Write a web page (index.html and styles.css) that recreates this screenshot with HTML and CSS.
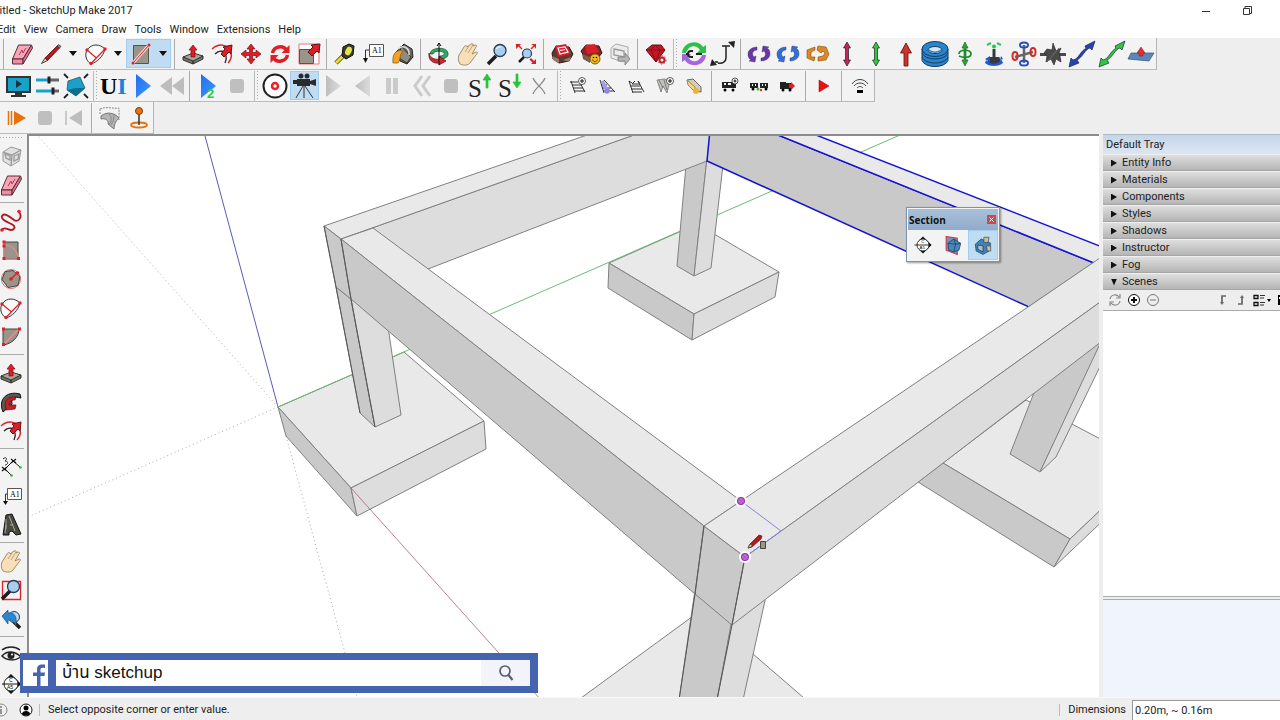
FILE: index.html
```html
<!DOCTYPE html>
<html lang="en">
<head>
<meta charset="utf-8">
<title>SketchUp Make 2017</title>
<link rel="stylesheet" href="styles.css">
</head>
<body>
<svg class="sprite" aria-hidden="true">
  <defs>
    <linearGradient id="gBlue" x1="0" x2="1" y1="0" y2="1"><stop offset="0" stop-color="#1f6df2"/><stop offset="1" stop-color="#3f9cff"/></linearGradient>
    <linearGradient id="gGrey" x1="0" x2="1"><stop offset="0" stop-color="#bdbdbd"/><stop offset="1" stop-color="#dcdcdc"/></linearGradient>
  </defs>
  <symbol id="eraser" viewBox="0 0 28 28"><path d="M10.500 5h13L15 19H4.500z" fill="#f8a5b8" stroke="#5a2d38"/><path d="M4.500 19H15v5H4.500z" fill="#ee8fa6" stroke="#5a2d38"/><path d="M23.500 5l1 3L15 24v-5z" fill="#e0708c" stroke="#5a2d38"/><path d="M11 15l3-5 1 3 3-5" fill="none" stroke="#b23b5c"/></symbol>
  <symbol id="pencil" viewBox="0 0 28 28"><path d="M8 18L20 6l2.500 2L10.500 20.500z" fill="#c3131b" stroke="#4b0d10" stroke-width=".8"/><path d="M8 18l2.500 2.500-6 3z" fill="#e8cda0" stroke="#222" stroke-width=".8"/><path d="M20 6l1.500-1.500 2.500 2L22.500 8z" fill="#888" stroke="#333" stroke-width=".8"/></symbol>
  <symbol id="arc" viewBox="0 0 28 28"><path d="M5 10C10 3 18 4 23 9C21 17 15 22 9 24C3 20 3 14 5 10z" fill="#fafafa" stroke="#333"/><path d="M9 23.500L23 9M5 10l9.500 8" stroke="#e0202a" stroke-width="1.200" fill="none"/><g fill="#e0202a"><circle cx="9" cy="23.500" r="1.700"/><circle cx="23" cy="9" r="1.700"/><circle cx="5" cy="10" r="1.700"/></g></symbol>
  <symbol id="rect" viewBox="0 0 28 28"><path d="M6.500 5.500h15v18h-15z" fill="#99958a" stroke="#56544d"/><path d="M6 23L22 5" stroke="#f6d4d4" stroke-width="3"/><path d="M6 23L22 5" stroke="#e0202a"/><circle cx="6" cy="23" r="1.500" fill="#e0202a"/><circle cx="22" cy="5" r="1.500" fill="#e0202a"/></symbol>
  <symbol id="push" viewBox="0 0 28 28"><path d="M4 17l10-4 10 3-10 6z" fill="#a8a698" stroke="#333"/><path d="M4 17v3l10 4v-3zM24 16v3l-10 5v-3z" fill="#77756a" stroke="#333"/><path d="M14 5l4 5h-2v7h-4v-7h-2z" fill="#df1d26" stroke="#7c0e13" stroke-width=".7"/></symbol>
  <symbol id="offset" viewBox="0 0 28 28"><path d="M4 9C12 2 21 5 23 13c1 4 0 7-3 10" fill="none" stroke="#e0202a" stroke-width="1.500"/><path d="M7 14c5-5 10-3 11 2 1 3 0 5-1 7" fill="none" stroke="#222" stroke-width="1.300"/><path d="M13 14l4-5-2-2 9-2-1 9-2-2-5 5z" fill="#df1d26" stroke="#681014"/></symbol>
  <symbol id="move" viewBox="0 0 28 28"><path d="M14 4l4 5h-2.500v3.500H19V10l5 4-5 4v-2.500h-3.500V19H18l-4 5-4-5h2.500v-3.500H9V18l-5-4 5-4v2.500h3.500V9H10z" fill="#df1d26" stroke="#7c0e13" stroke-width=".7"/></symbol>
  <symbol id="rotate" viewBox="0 0 28 28"><path d="M6.500 13C8 6 17 5 20 9.500M21.500 15C20 22 11 23 8 18.500" fill="none" stroke="#df1d26" stroke-width="3.500"/><path d="M23.500 5v8h-8zM4.500 23v-8h8z" fill="#df1d26"/></symbol>
  <symbol id="scale" viewBox="0 0 28 28"><path d="M4 4h20v20H4z" fill="#fff" stroke="#e57a7f"/><path d="M4.500 9.500h14v14h-14z" fill="#99958a" stroke="#56544d"/><path d="M13 12l5-5-2-2 9-1-1 9-2-2-5 5z" fill="#df1d26" stroke="#681014"/></symbol>
  <symbol id="tape" viewBox="0 0 28 28"><path d="M13 15l-8 8" stroke="#333" stroke-width="4.500"/><path d="M13 15l-8 8" stroke="#f0dd27" stroke-width="3"/><path d="M12 7l6-3 5 2-1 9-7 4-4-3z" fill="#3a3a26" stroke="#111"/><ellipse cx="17.500" cy="11" rx="3" ry="4.500" fill="#e6e14f" transform="rotate(25 17.500 11)"/></symbol>
  <symbol id="paint" viewBox="0 0 28 28"><path d="M7 12l8-8 8 5 1 8-6 7-7-3z" fill="#6c695f" stroke="#222"/><path d="M12 6l10 11-4 6-8-5z" fill="#8f8b7d" stroke="#222" stroke-width=".8"/><path d="M9 9c5-5 12-1 11 6" fill="none" stroke="#ddd" stroke-width="1.500"/><path d="M4 23c-1-9 3-14 10-12-4 4-2 9-5 12z" fill="#f2a323" stroke="#7d5514" stroke-width=".7"/></symbol>
  <symbol id="orbit" viewBox="0 0 28 28"><path d="M5 14c0-7 17-8 18-1 1 5-5 6-8 6v-3c3 0 5-2 4-3-3-3-10-2-11 1z" fill="#34a765" stroke="#1e4d31" stroke-width=".7"/><path d="M4 13c1 5 6 7 10 6v-3l7 5-7 4v-2C8 24 3 20 4 13z" fill="#cf2630" stroke="#5b1115" stroke-width=".7"/><path d="M14 3v22M12 6l2-3 2 3" stroke="#111" fill="none"/></symbol>
  <symbol id="hand" viewBox="0 0 28 28"><path d="M6 24c-2-3-2-6-1-9l5-8c1-2 3-2 3 0l4-3c2-1 3 1 2 2l2-1c2 0 2 1 1 2l-4 7 4-2c2 0 2 1 0 3l-6 8c-2 2-5 3-10 1z" fill="#f8dfb7" stroke="#8b7755" stroke-width=".8"/><path d="M11 12l4-6M14 13l5-8" stroke="#a88b61" stroke-width=".7"/></symbol>
  <symbol id="lens" viewBox="0 0 28 28"><path d="M5 24l8-8" stroke="#1d1d1d" stroke-width="3.500"/><circle cx="17" cy="10.500" r="6" fill="#a9cdee" stroke="#253c55" stroke-width="1.300"/><path d="M13.500 9c1-2 3-3 5-2" stroke="#e8f5ff" stroke-width="1.300" fill="none"/></symbol>
  <symbol id="extents" viewBox="0 0 28 28"><path d="M7 22l5-5" stroke="#1d1d1d" stroke-width="2.500"/><circle cx="15" cy="13.500" r="4.500" fill="#a9cdee" stroke="#253c55" stroke-width="1.200"/><g fill="#d71f29"><path d="M4 4h5L7.500 5.500l3 3-1 1-3-3L4 9zM24 4v5l-1.500-2.500-3 3-1-1 3-3L19 4zM24 24h-5l1.500-1.500-3-3 1.500-1.500 3 3L24 19z"/></g></symbol>
  <symbol id="wh" viewBox="0 0 28 28"><path d="M4 13l4-7 13 1 4 7-4 7-10 2-6-4z" fill="#5b3a30" stroke="#2b1a17"/><path d="M7 6l11-2 5 10-13 3z" fill="#d81f2c"/><path d="M10 8l7-1 3 5-8 2zM12 10.500l5-1" fill="none" stroke="#fff" stroke-width="1.200"/><path d="M4 16l7 3v4l-6-3zM15 20l8-3-2 5z" fill="#9a7a69"/></symbol>
  <symbol id="wh2" viewBox="0 0 28 28"><path d="M4 11l5-6 13 1 3 7-5 6-11 1z" fill="#8c2229" stroke="#2b1a17"/><path d="M8 5l10-1 4 8-12 2z" fill="#d81f2c"/><path d="M5 14l8 3v6l-7-4z" fill="#7b5a4e"/><circle cx="18" cy="19" r="5" fill="#f5be28" stroke="#7b5b10"/><path d="M15.500 19.500c1 3 4 3 5 0" fill="none" stroke="#553c00"/><circle cx="16.500" cy="17.500" r=".8"/><circle cx="19.500" cy="17.500" r=".8"/></symbol>
  <symbol id="share" viewBox="0 0 28 28"><path d="M5 8l5-4 12 3v12l-5 3-12-4z" fill="#ececec" stroke="#aaa"/><path d="M8 9l10 2v6L8 15z" fill="none" stroke="#9a9a9a" stroke-width="1.300"/><path d="M12 17h7v-4l5 6-5 6v-4h-7z" fill="#b5b5b5" stroke="#888"/></symbol>
  <symbol id="ruby" viewBox="0 0 28 28"><path d="M4 10l6-5h9l4 5-9 12z" fill="#c51622" stroke="#601016"/><path d="M4 10h19M9 10l4-5 5 5M9 10l5 12 4-12" fill="none" stroke="#8a0e17"/><circle cx="20" cy="20" r="2.500" fill="#f2f2f2" stroke="#b92430" stroke-width="2"/><circle cx="20" cy="20" r="4" fill="none" stroke="#b92430" stroke-dasharray="1.500 1.500"/></symbol>
  <symbol id="cyc" viewBox="0 0 28 28"><path d="M2 13C3 1 19-1 23 7l3-2v8h-9l3-3C17 5 9 4 6 13z" fill="#2fc04b"/><path d="M26 15c-1 12-17 13-21 5l-3 2v-8h9l-3 3c3 6 11 6 14-2z" fill="#a765dc"/><path d="M13 11h-2a3 3 0 0 0 0 6h2M16 14h6M6 14h3" stroke="#222" stroke-width="2" fill="none"/></symbol>
  <symbol id="jcurve" viewBox="0 0 28 28"><path d="M17 6v12c0 4-4 6-8 5M13 6h8M6 22h3" fill="none" stroke="#222" stroke-width="1.500"/><path d="M19 2l7-1-1 7zM1 26l2-7 5 6z" fill="#222"/></symbol>
  <symbol id="pair" viewBox="0 0 28 28"><path d="M3 14c0-4 4-7 9-7v3c-4 0-6 4-3 7l2-1-1 6-6-1 2-1c-2-1-3-3-3-6zM25 14c0 4-4 7-9 7v-3c4 0 6-4 3-7l-2 1 1-6 6 1-2 1c2 1 3 3 3 6z" fill="currentColor" stroke="#2b2b55" stroke-width=".4"/></symbol>
  <symbol id="pair2" viewBox="0 0 28 28"><path d="M3 10l8-3v3l-4 2v5h4l-1 4-7-3zM14 6l8 1 3 7-3 6-8 1v-4l5-1 2-3-2-2-2 2-4-3z" fill="#e08722" stroke="#7d4b10" stroke-width=".6"/></symbol>
  <symbol id="vert" viewBox="0 0 28 28"><path d="M14 2l3.500 6h-2v12h2L14 26l-3.500-6h2V8h-2z" fill="currentColor" stroke="#222" stroke-width=".7"/></symbol>
  <symbol id="up" viewBox="0 0 28 28"><path d="M14 3l5.500 10H16v13h-4V13H8.500z" fill="#d03428" stroke="#511" stroke-width=".8"/></symbol>
  <symbol id="spring" viewBox="0 0 28 28"><path d="M1 9c0 0 0 9 0 11 3 9 23 9 26 0V9z" fill="#2b84c9"/><ellipse cx="14" cy="9" rx="13" ry="7.500" fill="#2b84c9" stroke="#123e69"/><ellipse cx="14" cy="10" rx="7" ry="3.500" fill="#d6e6f2" stroke="#123e69"/><path d="M8 10c3 3 9 3 12 0" fill="none" stroke="#2b84c9" stroke-width="1.500"/><path d="M1 13c3 8 23 8 26 0M1 17c3 8 23 8 26 0M1 20.500c3 8 23 8 26 0M1 9v11.500M27 9v11.500" fill="none" stroke="#123e69"/></symbol>
  <symbol id="spin" viewBox="0 0 28 28"><path d="M14 2l3 6h-2v12h2l-3 6-3-6h2V8h-2z" fill="#2aa634" stroke="#164f1b" stroke-width=".6"/><path d="M8 14c0-5 12-5 12 0 0 4-8 4-12 2" fill="none" stroke="#1c8a26" stroke-width="1.700"/></symbol>
  <symbol id="joy" viewBox="0 0 28 28"><path d="M12.500 9h3v8h4l1 5c-4 4-9 4-13 0l1-5h4z" fill="#333a42"/><path d="M6 20c4 5 13 5 15-1l2 4c-4 4-14 4-18 0z" fill="#2657cd"/><path d="M5 19l5-3v6zM21 16l2 3-3 1z" fill="#2657cd"/><circle cx="14" cy="6.500" r="2" fill="#18cc45"/><path d="M7 5l4-2M17 3l4 2" stroke="#34c758" stroke-width="2"/></symbol>
  <symbol id="multi" viewBox="0 0 28 28"><path d="M5 17l18-5M14 5v18" stroke="#666" stroke-width="2.500"/><g fill="none" stroke-width="2"><ellipse cx="14" cy="5" rx="4" ry="2.500" stroke="#274fc0"/><ellipse cx="14" cy="23" rx="4" ry="2.500" stroke="#274fc0"/><ellipse cx="23" cy="12" rx="2.500" ry="4" stroke="#d52929"/><ellipse cx="5" cy="16" rx="2.500" ry="4" stroke="#d52929"/></g></symbol>
  <symbol id="jack" viewBox="0 0 28 28"><path d="M1 13h26v3H1z" fill="#4a4a4a"/><path d="M14 3l3 8 5-3-2 5 1 3 1 6-5-3-2 6-3-6-5 3 1-6-3-3 3-4 5 1z" fill="#4a4a4a" stroke="#2c2c2c" stroke-width=".7"/><path d="M8 22L20 8" stroke="#6d6d6d"/></symbol>
  <symbol id="diag" viewBox="0 0 28 28"><path d="M1 27l2-9 2 2c6-1 7-9 13-11.500L17 6l10-5-3 9-2-2c-5 1-7 9-13 12l2 3z" fill="currentColor" stroke="#1a2a45" stroke-width=".7"/></symbol>
  <symbol id="plane" viewBox="0 0 28 28"><path d="M4 13l23 0-5 8-21-2z" fill="#5d86b8" stroke="#3a5375" stroke-width=".7"/><path d="M14 7l4 6h-2v3h-4v-3h-2z" fill="#dd3038" stroke="#8c1b20" stroke-width=".5"/></symbol>

  <symbol id="monitor" viewBox="0 0 28 28"><path d="M3 5h23v15H3z" fill="#18a2ca" stroke="#333" stroke-width="2"/><path d="M12 8l6 4-6 4z" fill="#15323d"/><path d="M7 24h15M11 22h7" stroke="#333" stroke-width="2"/></symbol>
  <symbol id="sliders" viewBox="0 0 28 28"><path d="M3 8h12M3 19h16" stroke="#18a2ca" stroke-width="3"/><path d="M15 8h11M20 19h6" stroke="#666" stroke-width="3"/><path d="M16 4.500v7M20 15.500v7" stroke="#222" stroke-width="3"/></symbol>
  <symbol id="cube" viewBox="0 0 28 28"><path d="M6 9l12-4 5 11-9 8-9-6z" fill="#18a2ca" stroke="#28454f" stroke-width=".7"/><path d="M23 16l-9 8-9-6 9-2z" fill="#0c6d8f"/><path d="M2 2l4 4M26 2l-4 4M2 26l4-4M26 26l-4-4" stroke="#222" stroke-width="1.800"/></symbol>
  <symbol id="play" viewBox="0 0 28 28"><path d="M7 2l15 12L7 26z" fill="url(#gBlue)"/></symbol>
  <symbol id="rew" viewBox="0 0 28 28"><path d="M14 5v18L2 14zM26 5v18l-12-9z" fill="#bdbdbd"/></symbol>
  <symbol id="stop" viewBox="0 0 28 28"><rect x="7" y="7" width="14" height="14" rx="3" fill="#bfbfbf"/></symbol>
  <symbol id="rec" viewBox="0 0 28 28"><circle cx="14" cy="14" r="11.500" fill="#fff" stroke="#222" stroke-width="2"/><circle cx="14" cy="14" r="3" fill="none" stroke="#ef2028" stroke-width="2.500"/></symbol>
  <symbol id="movie" viewBox="0 0 28 28"><g fill="#2a2a2a"><circle cx="11" cy="4" r="2.500"/><circle cx="17" cy="4" r="2.500"/><path d="M7 7h13v7H7zM20 9l6-2v7l-6-2zM3 8h4v4H3z"/></g><path d="M13 14L6 26M14 14v12M15 14l8 12" stroke="#333" fill="none"/></symbol>
  <symbol id="gplay" viewBox="0 0 28 28"><path d="M7 3l15 11L7 25z" fill="url(#gGrey)"/></symbol>
  <symbol id="gback" viewBox="0 0 28 28"><path d="M21 3v22L6 14z" fill="url(#gGrey)"/></symbol>
  <symbol id="pause" viewBox="0 0 28 28"><path d="M8 6h5v16H8zM15 6h5v16h-5z" fill="#cacaca"/></symbol>
  <symbol id="dback" viewBox="0 0 28 28"><path d="M14 4L7 14l7 10M22 4l-7 10 7 10" fill="none" stroke="#cbcbcb" stroke-width="3"/></symbol>
  <symbol id="ex" viewBox="0 0 28 28"><path d="M8 6c3 7 10 10 12 16M20 6C17 13 10 16 8 22" fill="none" stroke="#888" stroke-width="1.300"/></symbol>
  <symbol id="track" viewBox="0 0 28 28"><path d="M7 9l4 12M16 9l6 11M7 9l3 2M13 9l-3 3h8l-2-3M8 14h10M9 17h11M11 20h9" stroke="#333" fill="none"/></symbol>
  <symbol id="trackadd" viewBox="0 0 28 28"><path d="M7 9l4 12M15 9l6 11M6 10h8M8 13h10M9 16h10M10 19h11" stroke="#333" fill="none"/><circle cx="18" cy="9" r="3.500" fill="#fff" stroke="#333" stroke-width=".8"/><path d="M16 9h4M18 7v4" stroke="#111"/></symbol>
  <symbol id="trackblue" viewBox="0 0 28 28"><path d="M7 8l4 13M11 8l11 12M8 13h6M9 16h9M10 19h11" stroke="#333" fill="none"/><path d="M9 9l5 9" stroke="#a29df0" stroke-width="3.500"/><circle cx="14" cy="19" r="2.800" fill="#8c87e8"/></symbol>
  <symbol id="wall" viewBox="0 0 28 28"><path d="M6 8l4 12 2-6 4 7 3-13-6-1z" fill="#c2c2be" stroke="#666" stroke-width=".7"/><path d="M8 8l4 8M13 8l3 10" stroke="#777"/><circle cx="19" cy="9" r="3.500" fill="#fff" stroke="#333" stroke-width=".8"/><path d="M17 9h4M19 7v4" stroke="#111"/></symbol>
  <symbol id="wedge" viewBox="0 0 28 28"><path d="M7 8l6-1 8 8v5l-6-1z" fill="#d4cdbd" stroke="#666"/><path d="M7 8l8 7v5l-7-7z" fill="#f3d78b" stroke="#a98743"/><circle cx="16" cy="19" r="3" fill="#f0b03c"/></symbol>
  <symbol id="wagon" viewBox="0 0 28 28"><path d="M6 10h14v6H6z" fill="#222"/><path d="M8 11h2v2H8zM12 11h3v2h-3z" fill="#f2f2f2"/><circle cx="9" cy="18" r="1.500"/><circle cx="17" cy="18" r="1.500"/><circle cx="19" cy="9" r="3" fill="#fff" stroke="#333" stroke-width=".8"/><path d="M17.500 9h3M19 7.500v3" stroke="#111"/></symbol>
  <symbol id="wagons" viewBox="0 0 28 28"><path d="M5 11h8v5H5zM15 11h8v5h-8z" fill="#222"/><path d="M7 12h1v2H7zM10 12h1v2h-1zM17 12h1v2h-1zM20 12h1v2h-1z" fill="#eee"/><circle cx="8" cy="17" r="1.500"/><circle cx="21" cy="17" r="1.500"/><circle cx="13" cy="17" r="1.500" fill="#25c536"/><circle cx="16" cy="18" r="1.200" fill="#e03020"/></symbol>
  <symbol id="loco" viewBox="0 0 28 28"><path d="M6 10h6v7H6zM12 11h6v6h-6z" fill="#222"/><circle cx="9" cy="18" r="1.500"/><circle cx="16" cy="18" r="1.500"/><path d="M15 12h2v-2l4 4-4 4v-2h-2z" fill="#e01c24"/></symbol>
  <symbol id="redplay" viewBox="0 0 28 28"><path d="M9 8l10 6-10 6z" fill="#f00f0f" stroke="#900" stroke-width=".5"/></symbol>
  <symbol id="signal" viewBox="0 0 28 28"><path d="M6 12c4-6 12-6 16 0M8 14c3-4 9-4 12 0M11 16c2-2 4-2 6 0" fill="none" stroke="#444"/><path d="M11 18h6v3h-6z"/></symbol>
  <symbol id="oplay" viewBox="0 0 28 28"><path d="M6.500 7v14M9.500 7v14" stroke="#e8720c" stroke-width="1.500"/><path d="M12 7l12 7-12 7z" fill="#e8720c"/></symbol>
  <symbol id="gstart" viewBox="0 0 28 28"><path d="M6 7v14" stroke="#bbb" stroke-width="1.500"/><path d="M22 6v16L9 14z" fill="#bdbdbd"/></symbol>
  <symbol id="cloth" viewBox="0 0 28 28"><path d="M4 5c6-3 13 0 19-1v12M4 5v6" fill="none" stroke="#888" stroke-dasharray="2 1"/><path d="M5 12c6-5 14-3 18 2-2 2-5 5-5 11l-6-5c1-4-3-6-7-5z" fill="#b5b5b5" stroke="#777"/><path d="M13 10c3 3 3 8 0 10M18 11c0 4-1 7-3 10" fill="none" stroke="#888"/></symbol>
  <symbol id="pin" viewBox="0 0 28 28"><ellipse cx="14" cy="21" rx="8" ry="2.500" fill="none" stroke="#e8720c" stroke-width="1.800"/><path d="M14 9v12" stroke="#333" stroke-width="1.500"/><circle cx="14" cy="7" r="3.500" fill="#e8720c" stroke="#7a3d09"/></symbol>

  <symbol id="comp" viewBox="0 0 28 28"><path d="M6 10l8-5 10 3-2 11-8 5-8-5z" fill="#e1e1e1" stroke="#999"/><path d="M6 10l9 3 9-5M15 13l-1 11M8 12l5 2v4l-4-2zM17 14l5-2-1 5-4 2z" fill="none" stroke="#999" stroke-width="1.300"/></symbol>
  <symbol id="free" viewBox="0 0 28 28"><path d="M5 23c2-4 6 0 9 0s5-3 2-5S3 13 5 9s8 1 12 4 9-3 5-8" fill="none" stroke="#b01822" stroke-width="1.800"/><circle cx="5" cy="23" r="1.800" fill="#e0202a"/><circle cx="22" cy="4.500" r="1.800" fill="#e0202a"/></symbol>
  <symbol id="rrect" viewBox="0 0 28 28"><path d="M7 6h14v17H7z" fill="#99958a" stroke="#444"/><path d="M7 9c8 0 14 6 14 13M7 5v18h15" fill="none" stroke="#ef8a8e" stroke-width="1.200"/><path d="M5.500 4.500h3v3h-3zM5.500 8.500h3v3h-3zM5.500 21h3v3h-3zM20 21h3v3h-3z" fill="#e0202a"/></symbol>
  <symbol id="poly" viewBox="0 0 28 28"><circle cx="14" cy="14" r="9.500" fill="none" stroke="#e66a70"/><path d="M16 5.500l7 6-2 9-10 2-6-8 3-8z" fill="#99958a" stroke="#444"/><path d="M14 14l6-6" stroke="#e0202a" stroke-width="1.500"/><circle cx="14" cy="14" r="1.800" fill="#e0202a"/><circle cx="20.500" cy="8" r="1.800" fill="#e0202a"/></symbol>
  <symbol id="pie" viewBox="0 0 28 28"><path d="M6 6h16C22 14 15 21 6 22z" fill="#99958a" stroke="#444"/><path d="M6 22L22 6" stroke="#ef8a8e" stroke-width="1.500"/><path d="M5 4.500h3v3H5zM21 4.500h3v3h-3zM5 20h3v3H5z" fill="#e0202a"/></symbol>
  <symbol id="follow" viewBox="0 0 28 28"><path d="M5 21C2 9 12 3 23 6l1 4c-7-2-10 0-9 6l-2 2-7 6z" fill="#5a5a52" stroke="#111"/><path d="M8 17c0-6 5-9 11-8l-1 3c-4 0-6 2-6 5l7 0-1 4-9 1z" fill="#c91d27" stroke="#5c0e13" stroke-width=".7"/></symbol>
  <symbol id="dim" viewBox="0 0 28 28"><path d="M8 16L16 8M16 8l7 6M8 16l6 6" fill="none" stroke="#222"/><path d="M5 14l5 4M5 18l5-4M14 6l5 4M14 10l5-4" stroke="#111" stroke-width="1.200"/><circle cx="23.500" cy="14.500" r="1.300" fill="#37b34a"/><circle cx="14.500" cy="22.500" r="1.300" fill="#37b34a"/><path d="M6 6c3-3 5 0 2 2 4 0 3 4 0 4" fill="none" stroke="#333"/></symbol>
  <symbol id="bigA" viewBox="0 0 28 28"><path d="M9 4l6-1 9 20-5 1-4-4-3 1v3l-6 0z" fill="#4a4a40" stroke="#111"/><path d="M9 8v10M12 5l6 15M13 14h3M8 22l1-8" stroke="#a8a89a"/></symbol>
  <symbol id="zwin" viewBox="0 0 28 28"><path d="M5.500 5.500h18v18h-18z" fill="#f3f3f3" stroke="#e0202a" stroke-width="1.300"/><path d="M5 23l8-8" stroke="#1d1d1d" stroke-width="3.500"/><circle cx="16.500" cy="10.500" r="6" fill="#a9cdee" stroke="#253c55" stroke-width="1.300"/></symbol>
  <symbol id="zprev" viewBox="0 0 28 28"><path d="M16 16l7 7" stroke="#1d1d1d" stroke-width="3.500"/><circle cx="17" cy="12" r="5.500" fill="#bcd8ee" stroke="#253c55"/><path d="M5 11l6-6v3c7-1 9 4 8 13-2-5-4-6-8-6v4z" fill="#2b87d1" stroke="#174d7c" stroke-width=".7"/></symbol>
  <symbol id="eye" viewBox="0 0 28 28"><path d="M5 9c5-4 13-4 18 0" fill="none" stroke="#222" stroke-width="1.500"/><path d="M5 15c5-6 13-5 19 1-6 4-14 4-19-1z" fill="#eee" stroke="#222" stroke-width="1.500"/><circle cx="14" cy="14.500" r="3.500" fill="#222"/><circle cx="15" cy="13.500" r="1" fill="#fff"/></symbol>
  <symbol id="secplane" viewBox="0 0 28 28"><path d="M6 4l13 2v19L6 20z" fill="#6d93bc" stroke="#d8323c" stroke-width="1.200"/><path d="M8 12l7-5 8 5-2 8-6 2-6-2z" fill="#4a86b8" stroke="#17395a" stroke-width=".8"/><path d="M15 7l2 6-9-1M17 13l-2 9M17 13l6-1" fill="none" stroke="#17395a" stroke-width=".8"/></symbol>
  <symbol id="seccut" viewBox="0 0 28 28"><path d="M5 13l7-6 11 5-2 9-7 4-8-4z" fill="#3d83bd" stroke="#163955" stroke-width=".8"/><path d="M15 5h6l-1 6h-5zM18 15h5v6h-4z" fill="#c8bea4" stroke="#333" stroke-width=".7"/><path d="M8 14l6 1v7l-6-3z" fill="#aebfca" stroke="#18354b" stroke-width=".8"/></symbol>
</svg>

<div class="app">
  <header class="titlebar">
    <h1 class="caption">titled - SketchUp Make 2017</h1>
    <div class="win">
      <button aria-label="Minimize"><svg viewBox="0 0 16 16"><path d="M4 8.500h8" stroke="#333"/></svg></button>
      <button aria-label="Restore"><svg viewBox="0 0 16 16"><path d="M4.500 5.500h6v6h-6zM6 5.500v-2h6.500v7h-2" fill="none" stroke="#333"/></svg></button>
    </div>
  </header>
  <nav class="menubar" aria-label="Menu">
    <button>Edit</button><button>View</button><button>Camera</button><button>Draw</button><button>Tools</button><button>Window</button><button>Extensions</button><button>Help</button>
  </nav>

  <div class="toolbars">
    <div class="bar">
      <i class="sep"></i>
      <button class="tool" aria-label="Eraser"><svg><use href="#eraser"/></svg></button>
      <button class="tool" aria-label="Line"><svg><use href="#pencil"/></svg></button><button class="drop" aria-label="Line tools"></button>
      <button class="tool" aria-label="Arc"><svg><use href="#arc"/></svg></button><button class="drop" aria-label="Arc tools"></button>
      <span class="picked"><button class="tool" aria-label="Rectangle"><svg><use href="#rect"/></svg></button><button class="drop" aria-label="Shape tools"></button></span>
      <i class="sep"></i>
      <button class="tool" aria-label="Push/Pull"><svg><use href="#push"/></svg></button>
      <button class="tool" aria-label="Offset"><svg><use href="#offset"/></svg></button>
      <button class="tool" aria-label="Move"><svg><use href="#move"/></svg></button>
      <button class="tool" aria-label="Rotate"><svg><use href="#rotate"/></svg></button>
      <button class="tool" aria-label="Scale"><svg><use href="#scale"/></svg></button>
      <i class="sep"></i>
      <button class="tool" aria-label="Tape Measure"><svg><use href="#tape"/></svg></button>
      <button class="tool" aria-label="Text"><svg viewBox="0 0 28 28"><path d="M9.500 4.500h14v12h-14z" fill="#fff" stroke="#555"/><path d="M9 10H5.500v9" fill="none" stroke="#333"/><path d="M3 18h5l-2.500 5z" fill="#111"/><text x="12" y="13" class="t-note">A1</text></svg></button>
      <button class="tool" aria-label="Paint Bucket"><svg><use href="#paint"/></svg></button>
      <i class="sep"></i>
      <button class="tool" aria-label="Orbit"><svg><use href="#orbit"/></svg></button>
      <button class="tool" aria-label="Pan"><svg><use href="#hand"/></svg></button>
      <button class="tool" aria-label="Zoom"><svg><use href="#lens"/></svg></button>
      <button class="tool" aria-label="Zoom Extents"><svg><use href="#extents"/></svg></button>
      <i class="sep"></i>
      <button class="tool" aria-label="3D Warehouse"><svg><use href="#wh"/></svg></button>
      <button class="tool" aria-label="Extension Warehouse"><svg><use href="#wh2"/></svg></button>
      <button class="tool" aria-label="Share Model"><svg><use href="#share"/></svg></button>
      <i class="sep"></i>
      <button class="tool" aria-label="Ruby"><svg><use href="#ruby"/></svg></button>
      <i class="sep grip"></i>
      <button class="tool" aria-label="Convert"><svg><use href="#cyc"/></svg></button>
      <button class="tool" aria-label="Joint curve"><svg><use href="#jcurve"/></svg></button>
      <i class="sep"></i>
      <div class="run joints">
        <button class="tool violet" aria-label="Hinge"><svg><use href="#pair"/></svg></button>
        <button class="tool azure" aria-label="Motor"><svg><use href="#pair"/></svg></button>
        <button class="tool" aria-label="Servo"><svg><use href="#pair2"/></svg></button>
        <button class="tool crimson" aria-label="Slider"><svg><use href="#vert"/></svg></button>
        <button class="tool green" aria-label="Piston"><svg><use href="#vert"/></svg></button>
        <button class="tool" aria-label="Up Vector"><svg><use href="#up"/></svg></button>
        <button class="tool" aria-label="Spring"><svg><use href="#spring"/></svg></button>
        <button class="tool" aria-label="Corkscrew"><svg><use href="#spin"/></svg></button>
        <button class="tool" aria-label="Ball"><svg><use href="#joy"/></svg></button>
        <button class="tool" aria-label="Universal"><svg><use href="#multi"/></svg></button>
        <button class="tool" aria-label="Fixed"><svg><use href="#jack"/></svg></button>
        <button class="tool navy" aria-label="Curvy Slider"><svg><use href="#diag"/></svg></button>
        <button class="tool green" aria-label="Curvy Piston"><svg><use href="#diag"/></svg></button>
        <button class="tool" aria-label="Plane"><svg><use href="#plane"/></svg></button>
      </div>
    </div>
    <div class="bar second">
      <button class="tool" aria-label="Player"><svg><use href="#monitor"/></svg></button>
      <button class="tool" aria-label="Settings"><svg><use href="#sliders"/></svg></button>
      <button class="tool" aria-label="Fit"><svg><use href="#cube"/></svg></button>
      <i class="sep grip"></i>
      <button class="tool" aria-label="UI"><svg viewBox="0 0 28 28"><text x="0" y="22" class="t-ui">U<tspan fill="#1d7fe0">I</tspan></text></svg></button>
      <button class="tool" aria-label="Play"><svg><use href="#play"/></svg></button>
      <button class="tool" aria-label="Rewind"><svg><use href="#rew"/></svg></button>
      <i class="sep"></i>
      <button class="tool" aria-label="Play 2"><svg viewBox="0 0 28 28"><path d="M7 2l15 12L7 26z" fill="url(#gBlue)"/><text x="13" y="26" class="t-two">2</text></svg></button>
      <button class="tool" aria-label="Stop"><svg><use href="#stop"/></svg></button>
      <i class="sep grip"></i>
      <div class="run anim">
        <button class="tool" aria-label="Record"><svg><use href="#rec"/></svg></button>
        <button class="tool on" aria-label="Camera"><svg><use href="#movie"/></svg></button>
        <button class="tool" aria-label="Forward"><svg><use href="#gplay"/></svg></button>
        <button class="tool" aria-label="Back"><svg><use href="#gback"/></svg></button>
        <button class="tool" aria-label="Pause"><svg><use href="#pause"/></svg></button>
        <button class="tool" aria-label="Fast back"><svg><use href="#dback"/></svg></button>
        <button class="tool" aria-label="Stop animation"><svg><use href="#stop"/></svg></button>
        <button class="tool" aria-label="Speed up"><svg viewBox="0 0 28 28"><text x="2" y="25" class="t-s">S</text><path d="M21 2l4 6h-3v8h-2V8h-3z" fill="#25c536" stroke="#25c536" stroke-width=".7"/></svg></button>
        <button class="tool" aria-label="Slow down"><svg viewBox="0 0 28 28"><text x="2" y="25" class="t-s">S</text><path d="M21 16l4-6h-3V2h-2v8h-3z" fill="#25c536" stroke="#25c536" stroke-width=".7"/></svg></button>
        <button class="tool" aria-label="Close"><svg><use href="#ex"/></svg></button>
      </div>
      <i class="sep grip"></i>
      <button class="tool" aria-label="Add track"><svg><use href="#trackadd"/></svg></button>
      <button class="tool" aria-label="Track path"><svg><use href="#trackblue"/></svg></button>
      <button class="tool" aria-label="Track"><svg><use href="#track"/></svg></button>
      <button class="tool" aria-label="Add wall"><svg><use href="#wall"/></svg></button>
      <button class="tool" aria-label="Ramp"><svg><use href="#wedge"/></svg></button>
      <i class="sep"></i>
      <button class="tool" aria-label="Add wagon"><svg><use href="#wagon"/></svg></button>
      <button class="tool" aria-label="Couple wagons"><svg><use href="#wagons"/></svg></button>
      <button class="tool" aria-label="Locomotive"><svg><use href="#loco"/></svg></button>
      <i class="sep"></i>
      <button class="tool" aria-label="Run"><svg><use href="#redplay"/></svg></button>
      <i class="sep"></i>
      <button class="tool" aria-label="Signal"><svg><use href="#signal"/></svg></button>
    </div>
    <div class="bar third">
      <button class="tool" aria-label="Play simulation"><svg><use href="#oplay"/></svg></button>
      <button class="tool" aria-label="Stop simulation"><svg><use href="#stop"/></svg></button>
      <button class="tool" aria-label="Reset"><svg><use href="#gstart"/></svg></button>
      <i class="sep"></i>
      <button class="tool" aria-label="Cloth"><svg><use href="#cloth"/></svg></button>
      <button class="tool" aria-label="Joystick"><svg><use href="#pin"/></svg></button>
    </div>
  </div>

  <div class="work">
    <aside class="side" aria-label="Large tool set">
      <i class="hgrip"></i>
      <button class="tool" aria-label="Make Component"><svg><use href="#comp"/></svg></button>
      <button class="tool" aria-label="Eraser tool"><svg><use href="#eraser"/></svg></button>
      <i class="hsep"></i>
      <button class="tool" aria-label="Freehand"><svg><use href="#free"/></svg></button>
      <button class="tool" aria-label="Rotated Rectangle"><svg><use href="#rrect"/></svg></button>
      <button class="tool" aria-label="Polygon"><svg><use href="#poly"/></svg></button>
      <button class="tool" aria-label="2 Point Arc"><svg><use href="#arc"/></svg></button>
      <button class="tool" aria-label="Pie"><svg><use href="#pie"/></svg></button>
      <i class="hsep"></i>
      <button class="tool" aria-label="Push/Pull tool"><svg><use href="#push"/></svg></button>
      <button class="tool" aria-label="Follow Me"><svg><use href="#follow"/></svg></button>
      <button class="tool" aria-label="Offset tool"><svg><use href="#offset"/></svg></button>
      <i class="hsep"></i>
      <button class="tool" aria-label="Dimension"><svg><use href="#dim"/></svg></button>
      <button class="tool" aria-label="Text tool"><svg viewBox="0 0 28 28"><path d="M10.500 6.500h14v11h-14z" fill="#fff" stroke="#555"/><path d="M10 12H8.500v7" fill="none" stroke="#333"/><path d="M6 19h5l-2.500 4z" fill="#111"/><text x="13" y="15" class="t-note">A1</text></svg></button>
      <button class="tool" aria-label="3D Text"><svg><use href="#bigA"/></svg></button>
      <i class="hsep"></i>
      <button class="tool" aria-label="Pan tool"><svg><use href="#hand"/></svg></button>
      <button class="tool" aria-label="Zoom Window"><svg><use href="#zwin"/></svg></button>
      <button class="tool" aria-label="Previous view"><svg><use href="#zprev"/></svg></button>
      <i class="hsep"></i>
      <button class="tool" aria-label="Look Around"><svg><use href="#eye"/></svg></button>
      <button class="tool" aria-label="Section Plane tool"><svg viewBox="0 0 28 28"><path d="M14 4l10 10-10 10-4-4V8z" fill="#111"/><circle cx="14" cy="14" r="7" fill="#fff" stroke="#222"/><path d="M5 14h18" stroke="#111"/><text x="12" y="12" class="t-c">C</text><text x="10" y="19" class="t-c">A5</text></svg></button>
    </aside>

    <main class="canvas">
      <svg class="scene" viewBox="29 136 1070 561" preserveAspectRatio="xMinYMin slice" role="img" aria-label="Model view">
        <g fill="none">
          <path d="M205 136L278 407" stroke="#5a5ab8"/>
          <g stroke="#aaa" stroke-dasharray="1 3"><path d="M278 407L38 136M278 407L28 517M286 436L357 697"/></g>
        </g>
        <g class="solid">
          <path class="top" d="M278 407L404 352L484 421L351 488z"/>
          <path class="dark" d="M278 407L351 488L357 516L286 436z"/>
          <path class="mid" d="M351 488L484 421L486 449L357 516z"/>
          <path class="top" d="M609 263L697 224L779 272L694 314z"/>
          <path class="dark" d="M609 263L694 314L692 340L608 288z"/>
          <path class="mid" d="M694 314L779 272L775 297L692 340z"/>
          <path class="top" d="M943 463L1026 400L1110 444V501L1070 539z"/>
          <path class="dark" d="M943 463L1070 539L1054 567L918 482z"/>
          <path class="mid" d="M1070 539L1110 501V514L1054 567z"/>
          <path class="top" d="M581 698L700 611L753 654L804 698z"/>
        </g>
        <path d="M278 407L900 135" stroke="#6cbb73"/>
        <path d="M351 488L541 700" stroke="#b06070" fill="none" stroke-width=".8"/>
        <g class="solid">
          <path class="dark" d="M686 165L707 158L694 276L677 266z"/>
          <path class="mid" d="M707 158L723 165L711 268L694 276z"/>
          <path class="dark" d="M336 287L351 299L375 427L360 413z"/>
          <path class="mid" d="M351 299L387 320L401 415L375 427z"/>
          <path class="dark" d="M1037 385L1105 335L1040 472L1010 454z"/>
          <path class="mid" d="M1105 333L1110 346L1056 457L1040 472z"/>
          <path class="dark" d="M695 590L732 620L717 700H679z"/>
          <path class="mid" d="M732 620L766 596L743 700H717z"/>
          <path class="mid" d="M341 239L634 135H710L707 161L428 269z"/>
          <path class="top" d="M324 226L587 135H634L341 239z"/>
          <path class="dark" d="M324 226L341 239L351 299L336 287z"/>
        </g>
        <g class="picked-beam">
          <path class="dark" d="M709.500 135H778L1094 263L1029 307L707 161z"/>
          <path class="top" d="M778 135H816L1110 250V256L1094 263z"/>
        </g>
        <g class="solid">
          <path class="top" d="M341 239L373 228L741 501L704 526z"/>
          <path class="dark" d="M341 239L704 526L695 594L351 299z"/>
          <path class="dark" d="M704 526L745 557L732 625L695 594z"/>
          <path class="top" d="M741 501L1028 307L1094 262L1110 251V295L745 557L704 526z"/>
          <path class="mid" d="M745 557L1110 295V335L732 625z"/>
        </g>
        <path class="edges" d="M704 526L695 594L679 700M745 557L732 625L717 700M341 239L351 299L375 427M324 226L336 287L360 413"/>
        <path d="M741 501L781 531L745 557" fill="none" stroke="#8585df"/>
        <g fill="#c66ad9" stroke="#fff" stroke-width="2"><circle cx="741" cy="501" r="5"/><circle cx="745" cy="557" r="5"/></g>
        <g fill="none" stroke="#83379d"><circle cx="741" cy="501" r="3.500"/><circle cx="745" cy="557" r="3.500"/><path d="M739 499l4 4m0-4l-4 4M743 555l4 4m0-4l-4 4" stroke="#a34dbb" stroke-width=".7"/></g>
        <path d="M748 548l2-4 9-9 3 1-1 3-9 8z" fill="#b3171d" stroke="#4a2020" stroke-width=".7"/><path d="M748 548l2-4 3 2z" fill="#d9c8a0" stroke="#333" stroke-width=".6"/><path d="M760.500 541.500h5v7h-5z" fill="#99958a" stroke="#444"/>
      </svg>

      <section class="palette" aria-label="Section palette">
        <div class="palette-head"><h2>Section</h2><button aria-label="Close palette"><svg viewBox="0 0 9 9"><path d="M2.500 2.500l4 4m0-4l-4 4" stroke="#fff"/></svg></button></div>
        <div class="palette-body">
          <button aria-label="Section Plane"><svg viewBox="0 0 28 28"><path d="M14 4l10 10-10 10-4-4V8z" fill="#111"/><circle cx="14" cy="14" r="7" fill="#fff" stroke="#222"/><path d="M4 14h19" stroke="#111"/><text x="12" y="12" class="t-c">C</text><text x="10" y="19" class="t-c">A5</text></svg></button>
          <button aria-label="Display Section Planes"><svg><use href="#secplane"/></svg></button>
          <button class="on" aria-label="Display Section Cuts"><svg><use href="#seccut"/></svg></button>
        </div>
      </section>
    </main>

    <aside class="tray">
      <h2 class="tray-title">Default Tray</h2>
      <button class="panel">Entity Info</button>
      <button class="panel">Materials</button>
      <button class="panel">Components</button>
      <button class="panel">Styles</button>
      <button class="panel">Shadows</button>
      <button class="panel">Instructor</button>
      <button class="panel">Fog</button>
      <button class="panel open" aria-expanded="true">Scenes</button>
      <div class="scene-tools">
        <button aria-label="Update scene"><svg viewBox="0 0 14 14"><path d="M2 6c1-5 7-5 9-2M12 8c-1 5-7 5-9 2M12 1v4H8M2 13V9h4" fill="none" stroke="#888" stroke-width="1.200"/></svg></button>
        <button aria-label="Add scene"><svg viewBox="0 0 14 14"><circle cx="7" cy="7" r="5.500" fill="#fff" stroke="#111"/><path d="M4 7h6M7 4v6" stroke="#111" stroke-width="2"/></svg></button>
        <button aria-label="Remove scene"><svg viewBox="0 0 14 14"><circle cx="7" cy="7" r="5.500" fill="none" stroke="#777"/><path d="M4 7h6" stroke="#777"/></svg></button>
        <span class="grow"></span>
        <button aria-label="Move scene down"><svg viewBox="0 0 14 14"><path d="M8 10V3h4" fill="none" stroke="#666" stroke-width="1.700"/><path d="M6 9h4l-2 3z" fill="#666"/></svg></button>
        <button aria-label="Move scene up"><svg viewBox="0 0 14 14"><path d="M9 4v7H5" fill="none" stroke="#666" stroke-width="1.700"/><path d="M7 5h4L9 2z" fill="#666"/></svg></button>
        <button class="wide" aria-label="View options"><svg viewBox="0 0 20 14"><path d="M2 2.500h4v3H2zM2 9.500h4v3H2z" fill="none" stroke="#111" stroke-width="1.300"/><path d="M8 2.500h5M8 5h4M8 9.500h5M8 12h4" stroke="#333"/><path d="M15 6h4l-2 3z"/></svg></button>
        <button class="cut" aria-label="Details"><svg viewBox="0 0 14 14"><path d="M1 2h12v10H1z"/><path d="M2 4h10v2H2z" fill="#fff"/></svg></button>
      </div>
      <div class="scene-list"></div>
      <div class="splitter"></div>
      <div class="tray-foot"></div>
    </aside>
  </div>

  <footer class="status">
    <svg class="info" viewBox="0 0 14 14"><circle cx="7" cy="7" r="6" fill="none" stroke="#888"/><path d="M7 6v5M7 3v2" stroke="#777" stroke-width="1.500"/></svg>
    <svg class="user" viewBox="0 0 14 14"><circle cx="7" cy="7" r="6" fill="#fff" stroke="#111"/><circle cx="7" cy="5" r="2.500"/><path d="M3 11c0-4 8-4 8 0-2 2-6 2-8 0z"/></svg>
    <i class="tick"></i>
    <p class="hint">Select opposite corner or enter value.</p>
    <i class="tick"></i>
    <label for="dims">Dimensions</label>
    <input id="dims" type="text" value="0.20m, ~ 0.16m">
  </footer>

  <form class="fb">
    <svg class="fb-logo" viewBox="0 0 25 26" aria-label="Facebook"><rect width="25" height="26" fill="#fff"/><path d="M14 26V16h-4v-3.500h4V10c0-5 2-6 8-5.500V8c-4-.5-4.500 0-4.500 2v2.500H22L21.500 16h-4v10z" fill="#4464b0"/></svg>
    <input type="text" aria-label="Search" value="บ้าน sketchup">
    <button type="button" aria-label="Search Facebook"><svg viewBox="0 0 18 18"><circle cx="8" cy="7" r="5" fill="none" stroke="#5a5f6e" stroke-width="1.700"/><path d="M11.500 11l4 5" stroke="#5a5f6e" stroke-width="2.200"/></svg></button>
  </form>
</div>
</body>
</html>
```

FILE: styles.css
```css
* { box-sizing: border-box; }
body {
  margin: 0;
  font: 11px/16px Roboto, "Noto Sans", sans-serif;
  color: #222;
  background: #eee;
  overflow: hidden;
}
button, input { font: inherit; color: inherit; border: 0; padding: 0; margin: 0; background: none; }
h1, h2, p { margin: 0; font-size: inherit; font-weight: 400; }
svg { display: block; }
.sprite { position: absolute; width: 0; height: 0; }
.t-note { font: 8px "Liberation Serif", serif; }
.t-ui { font: bold 24px "Liberation Serif", serif; }
.t-two { font: bold 13px "Liberation Sans", sans-serif; fill: #25d03a; }
.t-s { font: 25px "Liberation Serif", serif; fill: #222; }
.t-c { font: 5px "Liberation Sans", sans-serif; }

.app { position: relative; display: flex; flex-direction: column; height: 100vh; overflow: hidden; }

.titlebar { display: flex; justify-content: space-between; height: 20px; padding-top: 1px; align-items: center; background: #fff; }
.caption { margin-left: -4px; white-space: nowrap; }
.win { display: flex; gap: 25px; padding-right: 25px; }
.win button, .win svg { width: 16px; height: 16px; }
.menubar { display: flex; gap: 8px; height: 18px; padding-top: 1px; background: #fff; align-items: center; }
.menubar button { line-height: 16px; }
.menubar button:first-child { margin-left: -3px; }

.toolbars { display: flex; flex-direction: column; align-items: flex-start; background: #eee; }
.bar { display: flex; align-items: center; height: 32px; background: #f3f3f3; border-right: 1px solid #b5b5b5; border-bottom: 1px solid #bbb; }
.second { padding-left: 3px; }
.third { padding-left: 1px; }
.tool { width: 29px; height: 29px; flex: none; display: grid; place-items: center; }
.tool svg { width: 28px; height: 28px; }
.sep { width: 7px; height: 30px; flex: none; background: linear-gradient(#aaa, #aaa) 3px 0 / 1px 100% no-repeat; }
.grip { width: 9px; background: linear-gradient(#bbb, #bbb) 3px 0 / 1px 100% no-repeat, repeating-linear-gradient(#aaa 0 1px, transparent 1px 3px) 6px 0 / 1px 100% no-repeat; }
.drop { width: 16px; height: 29px; display: grid; place-items: center; }
.drop::after { content: ""; border: 4px solid transparent; border-top: 5px solid #111; border-bottom: 0; }
.picked, .on { background: #c0dcf3; outline: 1px solid #a3cdf0; outline-offset: -1px; }
.picked { display: flex; }
.run { display: flex; justify-content: space-around; }
.joints { width: 412px; }
.anim { width: 294px; }
.violet { color: #6b36a8; }
.azure { color: #2f6fd6; }
.crimson { color: #c32657; }
.green { color: #2fc83c; }
.navy { color: #2742b8; }

.work { flex: 1; display: flex; min-height: 0; }
.side { width: 27px; flex: none; background: #f3f3f3; display: flex; flex-direction: column; }
.side .tool { margin-left: -4px; }
.hgrip { height: 7px; background: repeating-linear-gradient(90deg, #aaa 0 1px, transparent 1px 3px) 0 3px / 24px 1px no-repeat; flex: none; }
.hsep { height: 7px; flex: none; background: linear-gradient(#aaa, #aaa) 0 3px / 24px 1px no-repeat; }
.canvas { flex: 1; position: relative; background: #fff; border-left: 2px solid #8c8c8c; border-top: 2px solid #8c8c8c; overflow: hidden; min-width: 0; }
.scene { width: 100%; height: 100%; }
.scene .top { fill: #e9e9e9; }
.scene .mid { fill: #ddd; }
.scene .dark { fill: #c9c9c9; }
.solid { stroke: #808080; stroke-width: 1; stroke-linejoin: round; }
.edges { fill: none; stroke: #555; }
.picked-beam { stroke: #1414cf; stroke-width: 1.5; }

.palette { position: absolute; top: 71px; right: 99px; width: 94px; height: 55px; background: #f3f3f3; border: 1px solid #7d93ad; padding: 1px; box-shadow: 1px 1px 2px rgba(0, 0, 0, .4); }
.palette-head { display: flex; align-items: center; justify-content: space-between; height: 21px; padding: 0 2px 0 1px; background: linear-gradient(#a9c0d9, #91abc9); }
.palette-head h2 { font: bold 10px/20px "Open Sans", sans-serif; color: #111; }
.palette-head button { background: #ce4850; }
.palette-head svg { width: 9px; height: 9px; }
.palette-body { display: flex; height: 30px; }
.palette-body button { flex: 1; display: grid; place-items: center; }
.palette-body svg { width: 24px; height: 24px; }

.tray { width: 181px; flex: none; display: flex; flex-direction: column; border-left: 4px solid #eee; }
.tray-title { height: 20px; flex: none; padding-left: 3px; line-height: 20px; background: linear-gradient(#c6d6e8, #dbe6f2); border-top: 1px solid #aab8c8; }
.panel { height: 17px; flex: none; display: flex; align-items: center; gap: 5px; padding: 1px 0 0 8px; background: linear-gradient(#dedede, #b5b5b5); border-top: 1px solid #f0f0f0; border-bottom: 1px solid #a6a6a6; text-align: left; }
.panel::before { content: ""; width: 6px; height: 7px; flex: none; background: #111; clip-path: polygon(0 0, 100% 50%, 0 100%); }
.panel.open::before { clip-path: polygon(0 0, 100% 0, 50% 100%); }
.scene-tools { display: flex; align-items: center; gap: 5px; height: 21px; flex: none; padding-left: 5px; border-bottom: 1px solid #aaa; overflow: hidden; }
.scene-tools button { width: 14px; flex: none; }
.scene-tools svg { width: 100%; height: 14px; }
.scene-tools .grow { flex: 1; }
.scene-tools .wide { width: 20px; }
.scene-tools .cut { margin-right: -11px; }
.scene-list { flex: 1; background: #fff; }
.splitter { height: 4px; border: 1px solid #aaa; border-width: 1px 0; background: #eee; }
.tray-foot { height: 97px; background: #f0f4fc; }

.status { display: flex; align-items: center; height: 23px; flex: none; padding-top: 2px; background: #eee; border-top: 1px solid #f8f8f8; }
.status svg { width: 14px; height: 14px; flex: none; }
.status .info { margin-left: -6px; }
.status .user { margin-left: 11px; }
.tick { width: 1px; height: 12px; background: #bbb; margin: 0 8px 0 6px; }
.hint { flex: 1; }
.status input { width: 148px; height: 20px; margin-left: 6px; padding: 0 2px; background: #fff; border-left: 1px solid #999; border-top: 1px solid #999; }

.fb { position: absolute; left: 20px; bottom: 27px; width: 518px; height: 40px; display: flex; align-items: center; padding: 0 8px 0 3px; background: #4464b0; }
.fb-logo { width: 25px; height: 26px; margin-right: 8px; flex: none; }
.fb input { flex: 1; min-width: 0; height: 26px; padding: 0 6px; background: #fff; font: 17px/24px "Liberation Sans", "Noto Sans Thai", "Loma", sans-serif; color: #111; }
.fb button { width: 49px; height: 26px; display: grid; place-items: center; background: #f2f4f9; }
.fb button svg { width: 18px; height: 18px; }
```
